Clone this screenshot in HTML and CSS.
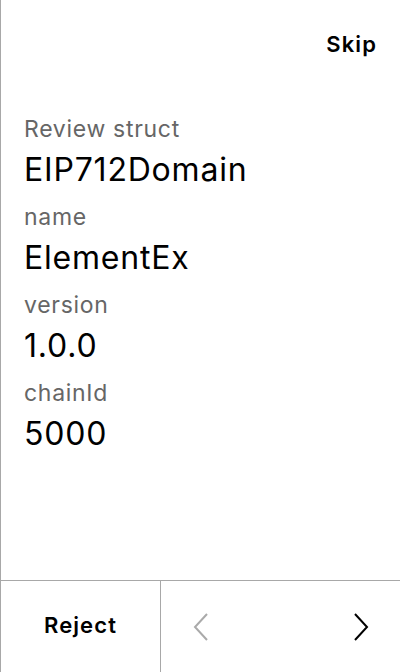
FILE: index.html
```html
<!DOCTYPE html>
<html>
<head>
<meta charset="utf-8">
<link rel="stylesheet" href="styles.css">
</head>
<body>
<div class="screen">
  <div class="header">
    <span class="skip">Skip</span>
  </div>
  <div class="content">
    <div class="label">Review struct</div>
    <div class="value">EIP712Domain</div>
    <div class="label">name</div>
    <div class="value">ElementEx</div>
    <div class="label">version</div>
    <div class="value">1.0.0</div>
    <div class="label">chainId</div>
    <div class="value">5000</div>
  </div>
  <div class="footer">
    <div class="reject">Reject</div>
    <div class="nav">
      <svg class="chev prev" width="16" height="28" viewBox="0 0 16 28"><path d="M14 1 L2 14 L14 27" fill="none" stroke="#aaaaaa" stroke-width="2"/></svg>
      <svg class="chev next" width="16" height="28" viewBox="0 0 16 28"><path d="M2 1 L14 14 L2 27" fill="none" stroke="#000000" stroke-width="2"/></svg>
    </div>
  </div>
</div>
</body>
</html>
```
FILE: styles.css
```css
html, body {
  margin: 0;
  padding: 0;
  background: #fff;
}
body {
  font-family: Inter, "Noto Sans", sans-serif;
  color: #000;
}
.screen {
  width: 400px;
  height: 672px;
  box-sizing: border-box;
  border-left: 1px solid #a8a8a8;
  display: flex;
  flex-direction: column;
}
.header {
  display: flex;
  justify-content: flex-end;
  padding: 30px 24px 0 0;
  height: 80px;
  box-sizing: border-box;
}
.skip {
  font-size: 22px;
  font-weight: 600;
  line-height: 28px;
  letter-spacing: 1.1px;
  margin-right: -1px;
}
.content {
  flex: 1;
  padding: 35px 0 0 23px;
}
.label {
  font-size: 23px;
  line-height: 28px;
  letter-spacing: 0.7px;
  color: #666666;
  margin-bottom: 9px;
}
.value {
  font-size: 32px;
  line-height: 36px;
  letter-spacing: 0.8px;
  margin-bottom: 15px;
}
.footer {
  height: 92px;
  border-top: 1px solid #a8a8a8;
  display: flex;
  box-sizing: border-box;
}
.reject {
  width: 159px;
  border-right: 1px solid #a8a8a8;
  display: flex;
  align-items: center;
  justify-content: center;
  font-size: 22px;
  font-weight: 600;
  letter-spacing: 1.1px;
  padding-bottom: 3px;
}
.nav {
  flex: 1;
  display: flex;
  align-items: center;
  justify-content: space-between;
  padding: 0 31px 0 32px;
}
```
